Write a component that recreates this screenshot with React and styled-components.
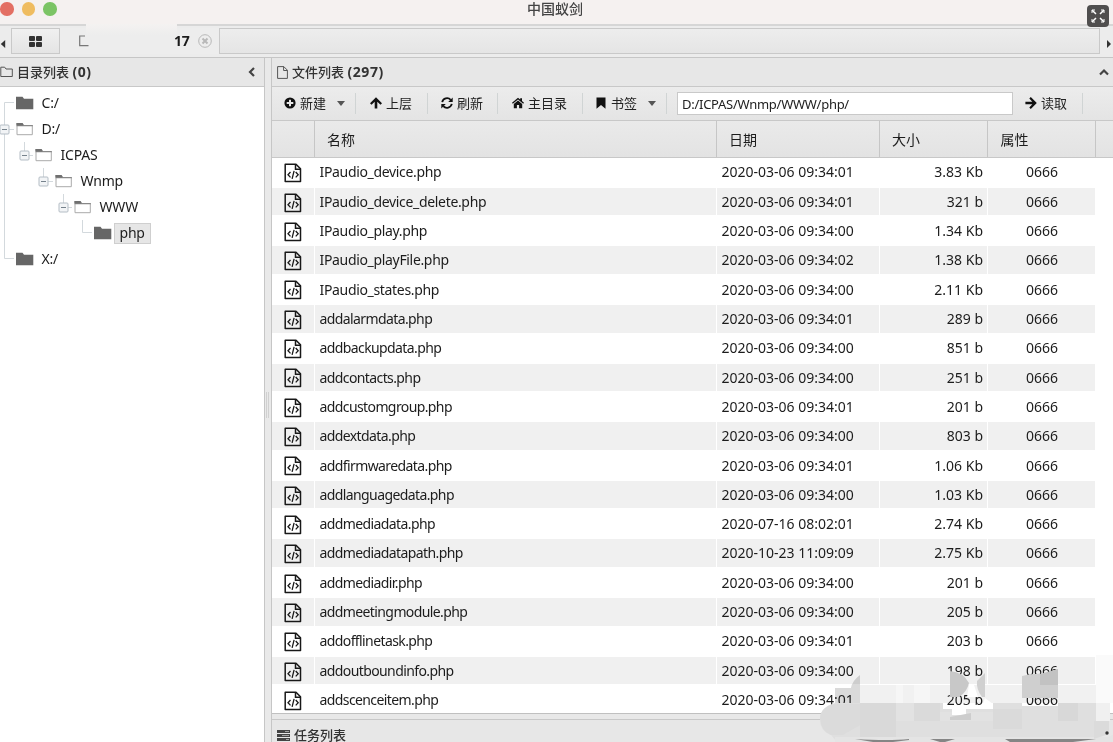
import React, { useState } from 'react';
import styled, { createGlobalStyle } from 'styled-components';

const GlobalStyle = createGlobalStyle`
  * {
    box-sizing: border-box;
  }
  body {
    margin: 0;
    overflow: hidden;
    background: #e8e8e8;
    color: #1c1c1c;
    font: 14px/20px 'Noto Sans', 'Noto Sans CJK SC', sans-serif;
  }
  svg {
    display: block;
    flex: none;
  }
`;

const Window = styled.div`
  position: relative;
  display: flex;
  flex-direction: column;
  width: 1113px;
  height: 742px;
  overflow: hidden;
`;

const TitleBar = styled.header`
  display: grid;
  grid-template-columns: 1fr auto 1fr;
  height: 24px;
  padding-right: 3px;
  background: #f5f1f0;
`;

const Lights = styled.div`
  display: flex;
  gap: 8px;
  padding: 2px 0 0;
`;

const Light = styled.span`
  width: 13.5px;
  height: 13.5px;
  border-radius: 50%;
  background: ${(p) => p.$color};
`;

const AppTitle = styled.h1`
  margin: 0;
  font-size: 14px;
  font-weight: 500;
  line-height: 17px;
  color: #444;
`;

const FullScreen = styled.button`
  position: absolute;
  top: 5px;
  right: 4px;
  display: grid;
  place-items: center;
  width: 22px;
  height: 22px;
  padding: 0;
  border: 0;
  border-radius: 4px;
  background: #504e4e;
`;

const TabStrip = styled.nav`
  position: relative;
  display: flex;
  height: 34px;
  padding-top: 2px;
  border-top: 2px solid #d6d6d6;
  border-bottom: 1px solid #c6c6c6;
  background: #ececec;
`;

const Scroll = styled.div`
  display: flex;
  align-items: center;
  justify-content: ${(p) => (p.$right ? 'flex-end' : 'flex-start')};
  width: ${(p) => (p.$right ? 13 : 11)}px;
  padding-top: 3px;
  padding-right: ${(p) => (p.$right ? 1 : 0)}px;
`;

const Tab = styled.div`
  display: flex;
  align-items: center;
  justify-content: ${(p) => (p.$home ? 'center' : 'flex-start')};
  width: ${(p) => p.$width}px;
  height: 26px;
  border: 1px solid ${(p) => (p.$home ? '#c9c9c9' : 'transparent')};
  background: ${(p) => (p.$home ? 'linear-gradient(#f0f0f0, #e4e4e4)' : '#ededed')};
`;

const TabName = styled.b`
  margin-left: 84px;
  font-size: 14px;
  letter-spacing: -0.3px;
`;

const TabClose = styled.span`
  margin-left: 9px;
`;

const TabRest = styled.div`
  flex: 1;
  height: 26px;
  border: 1px solid #c9c9c9;
  background: linear-gradient(#ededed, #e5e5e5);
`;

const Smudge = styled.div`
  position: absolute;
  top: -2px;
  left: 86px;
  width: 91px;
  height: 11px;
  background: linear-gradient(#f4f2f1, #ededed);
`;

const Body = styled.main`
  display: flex;
  flex: 1;
  min-height: 0;
`;

const Side = styled.aside`
  display: flex;
  flex-direction: column;
  width: 265px;
  border-right: 1px solid #c6c6c6;
  background: #fff;
`;

const Splitter = styled.div`
  display: flex;
  align-items: center;
  width: 6px;
  background: #e9e9e9;
`;

const Grip = styled.i`
  width: 3px;
  height: 26px;
  margin: 9px 0 0 1px;
  border: solid #d0d0d0;
  border-width: 0 1px;
`;

const Main = styled.section`
  display: flex;
  flex: 1;
  flex-direction: column;
  min-height: 0;
  border-left: 1px solid #c6c6c6;
`;

const PanelHead = styled.div`
  display: flex;
  flex: none;
  align-items: center;
  height: 29px;
  padding: 0 ${(p) => p.$right || 4}px 0 ${(p) => p.$left || 0}px;
  border-bottom: 1px solid #c8c8c8;
  background: #e7e7e7;
  color: #333;
  font-size: 13px;
`;

const PanelName = styled.span`
  flex: 1;
  margin-left: 4px;
  font-weight: 500;

  b {
    font-size: 14px;
    letter-spacing: 0.6px;
  }
`;

const Tree = styled.div`
  padding-top: 3px;
`;

const Node = styled.div`
  display: flex;
  align-items: center;
  height: 26px;
`;

const Branch = styled.svg`
  width: ${(p) => p.$width}px;
  height: 26px;
`;

const NodeName = styled.span`
  height: 21px;
  margin: 1px 0 0 1.5px;
  padding: 0 5px;
  border: 1px solid ${(p) => (p.$active ? '#cfcfcf' : 'transparent')};
  background: ${(p) => (p.$active ? '#e6e6e6' : 'none')};
  font-size: 14px;
  line-height: 18px;
  letter-spacing: -0.2px;
`;

const ToolBar = styled.div`
  display: flex;
  flex: none;
  align-items: center;
  height: 34px;
  padding-bottom: 1px;
  border-bottom: 1px solid #c8c8c8;
  background: linear-gradient(#ececec, #e4e4e4);
`;

const Tool = styled.button`
  display: flex;
  align-items: center;
  gap: 4px;
  width: ${(p) => p.$width}px;
  height: 21px;
  padding: 0 0 0 ${(p) => p.$left || 12}px;
  border: 0;
  border-right: 1px solid #d0d4d4;
  background: none;
  color: #222;
  font: inherit;
  font-size: 13px;
`;

const Caret = styled.i`
  margin: 1px 0 0 7px;
  border: 4.5px solid transparent;
  border-top: 5px solid #555;
  border-bottom: 0;
`;

const PathInput = styled.input`
  width: 336px;
  height: 23px;
  margin: 1px 0 0 10px;
  padding: 0 4px;
  border: 1px solid #c9c9c9;
  background: #fff;
  color: #222;
  font: 13px 'Noto Sans', sans-serif;
  letter-spacing: -0.27px;
  outline: 0;
`;

const columns = '42.5px 402px 163px 108.5px 108px 1fr';

const GridHead = styled.div`
  display: grid;
  flex: none;
  grid-template-columns: ${columns};
  height: 37px;
  border-bottom: 1px solid #c8c8c8;
  background: linear-gradient(#eaeaea, #e3e3e3);
`;

const HeadCell = styled.div`
  padding: 9px 0 0 12.5px;
  border-right: 1px solid #c6c6c6;
  line-height: 19px;

  &:last-child {
    border: 0;
  }
`;

const Files = styled.div`
  display: grid;
  flex: none;
  grid-auto-rows: 29.32px;
  height: 556px;
  border-bottom: 1px solid #c0c0c0;
  background: #fff;
  overflow: hidden;
`;

const FileRow = styled.div`
  display: grid;
  grid-template-columns: ${columns};
  padding: 0.4px 0 1.6px;
  line-height: 27.6px;
`;

const Cell = styled.div`
  padding: 0 4px 0 5px;
  border-right: 1px solid #fff;
  background: ${(p) => (p.$odd ? '#f0f0f0' : '#fff')};
  letter-spacing: ${(p) => p.$spacing || 0}px;
  text-align: ${(p) => p.$align || 'left'};
  white-space: nowrap;
`;

const IconCell = styled(Cell)`
  display: flex;
  align-items: center;
  padding: 2px 0 0 12px;
`;

const Tasks = styled.footer`
  flex: 1;
  min-height: 0;
  padding-top: 5px;
  overflow: hidden;
`;

const TaskHead = styled(PanelHead)`
  height: 32px;
  border-top: 1px solid #c8c8c8;
  line-height: 14px;
`;

const Mosaic = styled.svg`
  position: absolute;
  left: 813px;
  top: 655px;
  mix-blend-mode: ${(p) => (p.$tint ? 'multiply' : 'normal')};
`;

const tree = [
  { name: 'C:/', icon: 16, open: false },
  { name: 'D:/', icon: 16, open: true, box: 4 },
  { name: 'ICPAS', icon: 35, open: true, box: 24 },
  { name: 'Wnmp', icon: 55, open: true, box: 43 },
  { name: 'WWW', icon: 74, open: true, box: 63 },
  { name: 'php', icon: 94, open: false, active: true },
  { name: 'X:/', icon: 16, open: false, last: true },
];

const files = [
  ['IPaudio_device.php', '2020-03-06 09:34:01', '3.83 Kb'],
  ['IPaudio_device_delete.php', '2020-03-06 09:34:01', '321 b'],
  ['IPaudio_play.php', '2020-03-06 09:34:00', '1.34 Kb'],
  ['IPaudio_playFile.php', '2020-03-06 09:34:02', '1.38 Kb'],
  ['IPaudio_states.php', '2020-03-06 09:34:00', '2.11 Kb'],
  ['addalarmdata.php', '2020-03-06 09:34:01', '289 b'],
  ['addbackupdata.php', '2020-03-06 09:34:00', '851 b'],
  ['addcontacts.php', '2020-03-06 09:34:00', '251 b'],
  ['addcustomgroup.php', '2020-03-06 09:34:01', '201 b'],
  ['addextdata.php', '2020-03-06 09:34:00', '803 b'],
  ['addfirmwaredata.php', '2020-03-06 09:34:01', '1.06 Kb'],
  ['addlanguagedata.php', '2020-03-06 09:34:00', '1.03 Kb'],
  ['addmediadata.php', '2020-07-16 08:02:01', '2.74 Kb'],
  ['addmediadatapath.php', '2020-10-23 11:09:09', '2.75 Kb'],
  ['addmediadir.php', '2020-03-06 09:34:00', '201 b'],
  ['addmeetingmodule.php', '2020-03-06 09:34:00', '205 b'],
  ['addofflinetask.php', '2020-03-06 09:34:01', '203 b'],
  ['addoutboundinfo.php', '2020-03-06 09:34:00', '198 b'],
  ['addscenceitem.php', '2020-03-06 09:34:01', '205 b'],
];

// all-lowercase names are set a little tighter
const nameSpacing = (name) => (/[A-Z]/.test(name) ? -0.33 : -0.6);

const CodeFile = () => (
  <svg width="18" height="20" viewBox="0 0 18 20" fill="none" stroke="#181818" strokeWidth="1.5">
    <path d="M1.2 1.2H12L16.5 5.8V18.6H1.2Z" strokeLinejoin="round" />
    <path d="M11.5 1.2V6.2H16.5" />
    <path d="M6.5 9 4 11.8 6.5 14.4M11.7 9 14.2 11.8 11.7 14.4M10.1 7.8 8.1 15.8" strokeWidth="1.3" />
  </svg>
);

const Folder = ({ open }) =>
  open ? (
    <svg width="18" height="14" viewBox="0 0 18 14">
      <path d="M1 4V12.7H16.3V3.5H8" fill="#fff" stroke="#aaa" />
      <path d="M.5 1H6.5L8 3H16.8V4.2H.5Z" fill="#888" />
      <path d="M.5 1H6.5L7.5 3.5H.5Z" fill="#707070" />
    </svg>
  ) : (
    <svg width="18" height="14" viewBox="0 0 18 14">
      <path d="M0 .7H6.5L8 2.8H17.3V13.2H0Z" fill="#666" />
    </svg>
  );

// guide lines of the tree, drawn in front of every folder
const Guides = ({ node, index }) => {
  const { icon, box, last } = node;
  return (
    <Branch $width={icon} fill="none" stroke="#d3d9dd">
      {index === 0 && <path d="M4.5 26V12.5H14" />}
      {index > 0 && !last && <path d="M4.5 0V26" />}
      {last && <path d="M4.5 0V12.5H14" />}
      {index === 5 && <path d="M82.5 0V12.5H92" />}
      {box && (
        <>
          {index > 1 && <path d={`M${box + 0.5} 0V9`} />}
          <path d={`M${box + 5} 13.5H${icon - 2}`} />
          <rect x={box - 4} y="9" width="9" height="9" rx="1" fill="#f2f4f6" stroke="#b4bdc5" />
          <path d={`M${box - 2} 13.5H${box + 3}`} stroke="#76828c" />
        </>
      )}
    </Branch>
  );
};

const icons = {
  plus: (
    <path
      fillRule="evenodd"
      d="M6 .4A5.6 5.6 0 1 1 6 11.6 5.6 5.6 0 0 1 6 .4ZM5 2.7V5H2.7V7H5V9.3H7V7H9.3V5H7V2.7Z"
    />
  ),
  up: <path d="M6 .3 12 6.3 10.5 7.8 7.3 4.8V11.6H4.7V4.8L1.5 7.8 0 6.3Z" />,
  right: <path d="M11.8 6 5.8 0 4.3 1.5 7.3 4.7H.4V7.3H7.3L4.3 10.5 5.8 12Z" />,
  refresh: (
    <>
      <path d="M1.2 5.1A5 5 0 0 1 9.7 2.8M10.8 6.9A5 5 0 0 1 2.3 9.2" fill="none" stroke="currentColor" strokeWidth="1.8" />
      <path d="M11.7.5V5H7.2ZM.3 11.5V7H4.8Z" />
    </>
  ),
  home: (
    <>
      <path d="M6 .7 8.2 2.6V1.2H10V4.1L12 5.8 11.2 6.7 6 2.4.8 6.7 0 5.8Z" />
      <path d="M6 3.4 10.2 6.9V11.2H7.1V8H4.9V11.2H1.8V6.9Z" />
    </>
  ),
  bookmark: <path d="M1.5.5H10.5V11.8L6 8 1.5 11.8Z" />,
};

const Icon = ({ name }) => (
  <svg width="12" height="12" viewBox="0 0 12 12" fill="currentColor" color="#111">
    {icons[name]}
  </svg>
);

const App = () => {
  const [path, setPath] = useState('D:/ICPAS/Wnmp/WWW/php/');

  return (
    <>
      <GlobalStyle />
      <Window>
        <TitleBar>
          <Lights>
            <Light $color="#e36f63" />
            <Light $color="#efbc60" />
            <Light $color="#7bc465" />
          </Lights>
          <AppTitle>中国蚁剑</AppTitle>
        </TitleBar>

        <TabStrip>
          <Scroll>
            <svg width="6" height="10" viewBox="0 0 6 10">
              <path d="M5.2 1V9L.8 5Z" fill="#333" />
            </svg>
          </Scroll>
          <Tab $home $width={49}>
            <svg width="13" height="11" viewBox="0 0 13 11" fill="#333">
              <rect width="6" height="5" rx="1" />
              <rect x="7" width="6" height="5" rx="1" />
              <rect y="6" width="6" height="5" rx="1" />
              <rect x="7" y="6" width="6" height="5" rx="1" />
            </svg>
          </Tab>
          <Tab $width={159}>
            <svg width="29" height="14" viewBox="0 0 29 14">
              <path d="M24 2H18.7V11.7H27.5" fill="none" stroke="#777" strokeWidth="1.2" />
            </svg>
            <TabName>17</TabName>
            <TabClose>
              <svg width="14" height="14" viewBox="0 0 14 14" fill="none" stroke="#b8b8b8">
                <circle cx="7" cy="7" r="6.3" />
                <path d="M4.5 4.5 9.5 9.5M9.5 4.5 4.5 9.5" strokeWidth="2" />
              </svg>
            </TabClose>
          </Tab>
          <TabRest />
          <Scroll $right>
            <svg width="6" height="10" viewBox="0 0 6 10">
              <path d="M1 1V9L5 5Z" fill="#333" />
            </svg>
          </Scroll>
          <Smudge />
        </TabStrip>

        <Body>
          <Side>
            <PanelHead $right={8}>
              <svg width="13" height="12" viewBox="0 0 13 12" fill="none" stroke="#555">
                <path d="M.8 1.2H4.7L6 3H12.3V10.5H.8Z" strokeLinejoin="round" />
              </svg>
              <PanelName>
                目录列表 <b>(0)</b>
              </PanelName>
              <svg width="9" height="10" viewBox="0 0 9 10" fill="none" stroke="#444" strokeWidth="2.2">
                <path d="M7 1 3 5 7 9" />
              </svg>
            </PanelHead>
            <Tree>
              {tree.map((node, index) => (
                <Node key={node.name}>
                  <Guides node={node} index={index} />
                  <Folder open={node.open} />
                  <NodeName $active={node.active}>{node.name}</NodeName>
                </Node>
              ))}
            </Tree>
          </Side>
          <Splitter>
            <Grip />
          </Splitter>
          <Main>
            <PanelHead $left={5}>
              <svg width="11" height="13" viewBox="0 0 11 13" fill="none" stroke="#555">
                <path d="M.6.6H6.8L10.4 4.2V12.4H.6ZM6.6.6V4.5H10.4" />
              </svg>
              <PanelName>
                文件列表 <b>(297)</b>
              </PanelName>
              <svg width="10" height="9" viewBox="0 0 10 9" fill="none" stroke="#444" strokeWidth="2.2">
                <path d="M1 6.5 5 2.5 9 6.5" />
              </svg>
            </PanelHead>
            <ToolBar>
              <Tool $width={84}>
                <Icon name="plus" />
                新建
                <Caret />
              </Tool>
              <Tool $width={72} $left={14}>
                <Icon name="up" />
                上层
              </Tool>
              <Tool $width={70} $left={13}>
                <Icon name="refresh" />
                刷新
              </Tool>
              <Tool $width={85} $left={14}>
                <Icon name="home" />
                主目录
              </Tool>
              <Tool $width={84}>
                <Icon name="bookmark" />
                书签
                <Caret />
              </Tool>
              <PathInput value={path} onChange={(e) => setPath(e.target.value)} />
              <Tool $width={70}>
                <Icon name="right" />
                读取
              </Tool>
            </ToolBar>
            <GridHead>
              <HeadCell />
              <HeadCell>名称</HeadCell>
              <HeadCell>日期</HeadCell>
              <HeadCell>大小</HeadCell>
              <HeadCell>属性</HeadCell>
              <HeadCell />
            </GridHead>
            <Files>
              {files.map(([name, date, size], i) => (
                <FileRow key={name}>
                  <IconCell $odd={i % 2 === 1}>
                    <CodeFile />
                  </IconCell>
                  <Cell $odd={i % 2 === 1} $spacing={nameSpacing(name)}>
                    {name}
                  </Cell>
                  <Cell $odd={i % 2 === 1}>{date}</Cell>
                  <Cell $odd={i % 2 === 1} $align="right">
                    {size}
                  </Cell>
                  <Cell $odd={i % 2 === 1} $align="center">
                    0666
                  </Cell>
                </FileRow>
              ))}
            </Files>
            <Tasks>
              <TaskHead $left={5}>
                <svg width="13" height="11" viewBox="0 0 13 11" fill="#444">
                  <path d="M0 0H13V3H0ZM0 4H13V7H0ZM0 8H13V11H0Z" />
                  <path d="M8 1.5H12M5 5.5H12M9 9.5H12" stroke="#bbb" strokeWidth=".8" />
                </svg>
                <PanelName>任务列表</PanelName>
              </TaskHead>
            </Tasks>
          </Main>
        </Body>

        {/* pixelated watermark: a tint under the text, then the solid blocks */}
        <Mosaic $tint width="300" height="87" viewBox="0 0 300 87">
          <path d="M47 30H283V48H47Z" fill="#f1f1f1" />
          <path d="M47 20Q39 26 38 33H22V48H47Z" fill="#dadada" />
          <path d="M101 30H117V48H101ZM83 30H90V48H83Z" fill="#f6f6f6" />
          <path d="M283 0H300V48H283Z" fill="#fafafa" />
        </Mosaic>
        <Mosaic width="300" height="87" viewBox="0 0 300 87">
          <path d="M22 48H130V54H180V48H209V51H245V48H283V87H24L18 80Q7 76 7 64 7 52 22 48Z" fill="#dfdfdf" />
          <path d="M22 82H295L300 80V87H22Z" fill="#e4e4e4" />
          <path d="M22 49Q8 52 7 63 8 76 18 80H30L47 70V49Z" fill="#dbdbdb" />
          <path d="M47 48H83V82H47Z" fill="#d9d9d9" />
          <path d="M83 48H101V66H83Z" fill="#e2e2e2" />
          <path d="M101 48H127V66H101ZM180 54H209V74H180Z" fill="#dadada" />
          <path d="M127 57H180V66H127Z" fill="#e2e2e2" />
          <path d="M245 48H265V66H245Z" fill="#d8d8d8" />
          <path d="M283 48H297V66H283Z" fill="#f0f0f0" />
          <path d="M281 66H296V79L281 84Z" fill="#dbdbdb" />
          <path d="M137 16Q150 17 156 28 154 37 146 42H137Z" fill="#c8c8c8" />
          <path d="M164 26 172 18V42H169Q163 34 164 26Z" fill="#d0d0d0" />
          <path d="M209 21Q222 18 230 19H245V43H209Z" fill="#cfcfcf" />
          <path d="M227 19 245 14V30H227Z" fill="#c2c2c2" />
          <path d="M156 30H161L165 42H154ZM139 54H153V60H139ZM172 43 180 49V54H168Z" fill="#fff" />
          <path d="M137 62 158 58V65H137Z" fill="#cdcdcd" />
          <path d="M42 84Q76 86 96 84V85L80 87H60ZM117 84H142L132 87H127ZM192 84H283L260 87H197Z" fill="#858585" />
          <circle cx="294" cy="78" r="1.7" fill="#333" />
        </Mosaic>
        <FullScreen>
          <svg width="14" height="14" viewBox="0 0 14 14" fill="none" stroke="#fff" strokeWidth="1.5">
            <path d="M1.2 1.2 5 5M12.8 1.2 9 5M1.2 12.8 5 9M12.8 12.8 9 9" />
            <path d="M1 4V1H4M10 1H13V4M1 10V13H4M13 10V13H10" strokeWidth="1" />
          </svg>
        </FullScreen>
      </Window>
    </>
  );
};

export default App;
